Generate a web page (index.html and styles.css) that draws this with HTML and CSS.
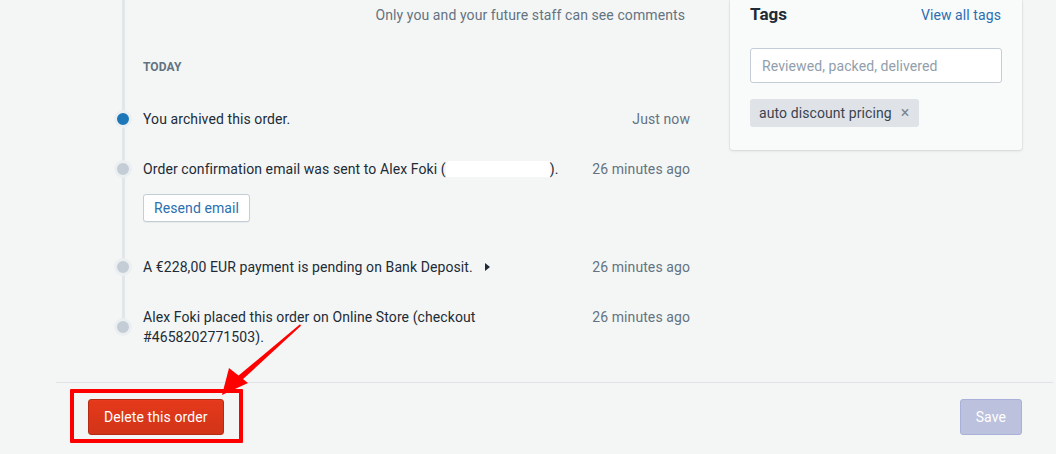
FILE: index.html
```html
<!DOCTYPE html>
<html lang="en">
<head>
<meta charset="utf-8">
<title>Order timeline</title>
<link rel="stylesheet" href="styles.css">
</head>
<body>
<div class="page">
  <div class="layout">
    <div class="main-col">
      <div class="timeline">
        <div class="hint">Only you and your future staff can see comments</div>
        <div class="day">TODAY</div>
        <div class="event event-first">
          <span class="dot dot-active"></span>
          <div class="event-text">You archived this order.</div>
          <div class="event-time">Just now</div>
        </div>
        <div class="event event-gap">
          <span class="dot"></span>
          <div class="event-text">Order confirmation email was sent to Alex Foki (<span class="redacted"></span>).</div>
          <div class="event-time">26 minutes ago</div>
        </div>
        <button class="btn btn-default resend">Resend email</button>
        <div class="event event-after-btn">
          <span class="dot"></span>
          <div class="event-text">A €228,00 EUR payment is pending on Bank Deposit. <span class="caret"></span></div>
          <div class="event-time">26 minutes ago</div>
        </div>
        <div class="event event-gap">
          <span class="dot"></span>
          <div class="event-text">Alex Foki placed this order on Online Store (checkout #4658202771503).</div>
          <div class="event-time">26 minutes ago</div>
        </div>
      </div>
    </div>
    <aside class="side-col">
      <div class="card">
        <div class="card-head">
          <h2 class="card-title">Tags</h2>
          <a class="link" href="#">View all tags</a>
        </div>
        <input class="text-input" type="text" placeholder="Reviewed, packed, delivered">
        <div class="tags">
          <span class="tag">auto discount pricing <span class="tag-x">×</span></span>
        </div>
      </div>
    </aside>
  </div>
  <div class="footer">
    <button class="btn btn-destructive">Delete this order</button>
    <button class="btn btn-primary-disabled">Save</button>
  </div>
</div>

<div class="annot-box"></div>
<svg class="annot-arrow" width="1056" height="454" viewBox="0 0 1056 454" xmlns="http://www.w3.org/2000/svg">
  <polygon points="300,324.2 301,325.8 242,380 238,376" fill="#ff0000"/>
  <polygon points="222,395 229,368 248,383" fill="#ff0000"/>
</svg>
</body>
</html>
```

FILE: styles.css
```css
* { box-sizing: border-box; }

html, body {
  margin: 0;
  padding: 0;
}

body {
  background: #f4f6f6;
  font-family: Roboto, "Liberation Sans", Arial, sans-serif;
  font-size: 14px;
  line-height: 20px;
  letter-spacing: 0.09px;
  color: #212b36;
  width: 1056px;
  height: 454px;
  overflow: hidden;
}

.page {
  padding-left: 56px;
  padding-right: 3px;
}

.layout {
  display: flex;
  gap: 30px;
}

.main-col {
  width: 644px;
  flex: none;
}

.side-col {
  width: 292px;
  flex: none;
}

/* Timeline */
.timeline {
  position: relative;
  margin-left: 58px;
  margin-right: 10px;
  display: flex;
  flex-direction: column;
}

.timeline::before {
  content: "";
  position: absolute;
  left: 8px;
  width: 3px;
  top: 0;
  bottom: 20px;
  background: #e3e6e8;
}

.hint {
  margin-top: 5px;
  text-align: right;
  padding-right: 5px;
  color: #637381;
}

.day {
  margin-top: 34px;
  margin-left: 29px;
  font-size: 12px;
  line-height: 16px;
  font-weight: 700;
  color: #637381;
  letter-spacing: 0.1px;
}

.event {
  position: relative;
  display: flex;
  align-items: center;
}

.event-first { margin-top: 34px; }
.event-gap { margin-top: 30px; }
.event-after-btn { margin-top: 35px; }

.dot {
  flex: none;
  width: 18px;
  height: 18px;
  border-radius: 50%;
  background: #c4cdd5;
  border: 3px solid #eceff1;
  margin-right: 11px;
}

.dot-active {
  background: #1c77b9;
}

.event-text {
  flex: 1;
  min-width: 0;
}

.event-time {
  flex: none;
  align-self: flex-start;
  padding-left: 20px;
  color: #637381;
  white-space: nowrap;
}

.redacted {
  display: inline-block;
  width: 104px;
  height: 16px;
  vertical-align: -3px;
  background: #ffffff;
}

.caret {
  display: inline-block;
  width: 0;
  height: 0;
  margin-left: 9px;
  border-top: 4px solid transparent;
  border-bottom: 4px solid transparent;
  border-left: 5px solid #212b36;
  vertical-align: 1px;
}

/* Buttons */
.btn {
  font-family: inherit;
  font-size: 14px;
  line-height: 16px;
  letter-spacing: 0.09px;
  border-radius: 3px;
  cursor: pointer;
}

.btn-default {
  background: #ffffff;
  border: 1px solid #c4cdd5;
  color: #2a6fb0;
  box-shadow: 0 1px 0 rgba(22, 29, 37, 0.05);
}

.resend {
  align-self: flex-start;
  margin-left: 29px;
  margin-top: 15px;
  height: 28px;
  padding: 0 10px;
}

.btn-destructive {
  height: 36px;
  padding: 0 15px;
  color: #ffffff;
  background: linear-gradient(to bottom, #e5391b, #d23418);
  border: 1px solid #b62b13;
  box-shadow: inset 0 1px 0 0 #e73d1f;
}

.btn-primary-disabled {
  height: 36px;
  padding: 0 15px;
  color: #ffffff;
  background: #bcc1dd;
  border: 1px solid #a9b0d9;
  cursor: default;
}

/* Card */
.card {
  background: #f9fafa;
  border-radius: 0 0 3px 3px;
  box-shadow: 0 0 0 1px rgba(63, 63, 68, 0.05), 0 1px 3px 0 rgba(63, 63, 68, 0.12);
  padding: 2px 20px 23px 20px;
}

.card-head {
  display: flex;
  justify-content: space-between;
  align-items: baseline;
  padding-right: 1px;
}

.card-title {
  margin: 0;
  font-size: 17px;
  line-height: 24px;
  font-weight: 700;
  color: #212b36;
}

.link {
  color: #2a6fb0;
  text-decoration: none;
  font-size: 14px;
}

.text-input {
  display: block;
  width: 252px;
  height: 35px;
  margin-top: 22px;
  padding: 0 11px;
  font-family: inherit;
  font-size: 14px;
  letter-spacing: 0.09px;
  border: 1px solid #c4cdd5;
  border-radius: 3px;
  background: #ffffff;
  color: #212b36;
}

.text-input::placeholder {
  color: #919eab;
}

.tags {
  margin-top: 16px;
  display: flex;
}

.tag {
  display: inline-flex;
  align-items: center;
  height: 28px;
  padding: 0 10px 0 9px;
  background: #dfe3e8;
  border-radius: 3px;
  color: #3a4450;
  font-size: 14px;
}

.tag-x {
  margin-left: 9px;
  color: #7a8591;
  font-size: 16px;
}

/* Footer */
.footer {
  margin-top: 35px;
  border-top: 1px solid #dfe3e8;
  padding: 16px 31px 0 32px;
  display: flex;
  justify-content: space-between;
}

/* Annotations overlaid on the screenshot */
.annot-box {
  position: absolute;
  left: 70px;
  top: 389px;
  width: 173px;
  height: 54px;
  border: 4px solid #ff0000;
  border-radius: 1px;
}

.annot-arrow {
  position: absolute;
  left: 0;
  top: 0;
  pointer-events: none;
}
```
